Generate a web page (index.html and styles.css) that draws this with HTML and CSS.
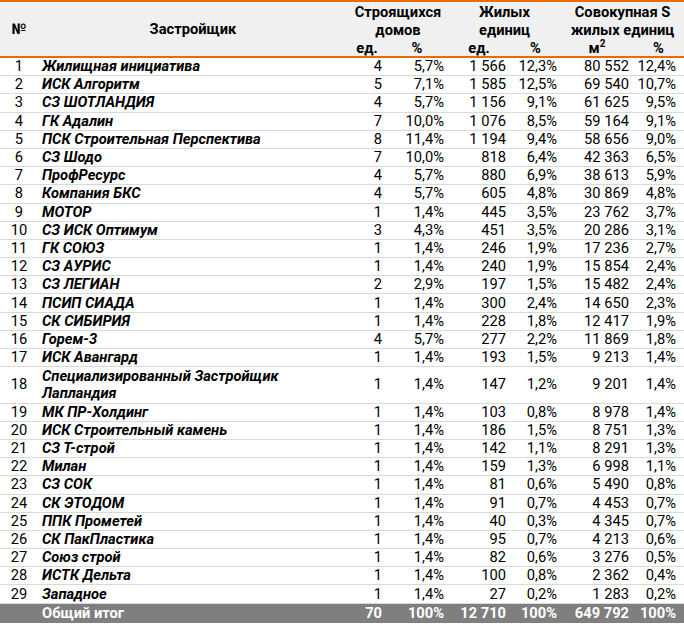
FILE: index.html
```
<!DOCTYPE html>
<html lang="ru">
<head>
<meta charset="utf-8">
<link rel="stylesheet" href="styles.css">
</head>
<body>
<table class="t">
<colgroup>
<col class="c-n"><col class="c-name"><col class="c-a"><col class="c-b"><col class="c-c"><col class="c-d"><col class="c-e"><col class="c-f">
</colgroup>
<thead>
<tr><th rowspan="3" class="h-span">№</th><th rowspan="3" class="h-span">Застройщик</th><th colspan="2">Строящихся</th><th colspan="2">Жилых</th><th colspan="2">Совокупная S</th></tr>
<tr><th colspan="2">домов</th><th colspan="2">единиц</th><th colspan="2">жилых единиц</th></tr>
<tr class="h-last"><th>ед.</th><th>%</th><th>ед.</th><th>%</th><th>м<sup>2</sup></th><th>%</th></tr>
</thead>
<tbody>
<tr><td class="no">1</td><td class="nm">Жилищная инициатива</td><td>4</td><td>5,7%</td><td>1 566</td><td>12,3%</td><td>80 552</td><td>12,4%</td></tr>
<tr><td class="no">2</td><td class="nm">ИСК Алгоритм</td><td>5</td><td>7,1%</td><td>1 585</td><td>12,5%</td><td>69 540</td><td>10,7%</td></tr>
<tr><td class="no">3</td><td class="nm">СЗ ШОТЛАНДИЯ</td><td>4</td><td>5,7%</td><td>1 156</td><td>9,1%</td><td>61 625</td><td>9,5%</td></tr>
<tr><td class="no">4</td><td class="nm">ГК Адалин</td><td>7</td><td>10,0%</td><td>1 076</td><td>8,5%</td><td>59 164</td><td>9,1%</td></tr>
<tr><td class="no">5</td><td class="nm">ПСК Строительная Перспектива</td><td>8</td><td>11,4%</td><td>1 194</td><td>9,4%</td><td>58 656</td><td>9,0%</td></tr>
<tr><td class="no">6</td><td class="nm">СЗ Шодо</td><td>7</td><td>10,0%</td><td>818</td><td>6,4%</td><td>42 363</td><td>6,5%</td></tr>
<tr><td class="no">7</td><td class="nm">ПрофРесурс</td><td>4</td><td>5,7%</td><td>880</td><td>6,9%</td><td>38 613</td><td>5,9%</td></tr>
<tr><td class="no">8</td><td class="nm">Компания БКС</td><td>4</td><td>5,7%</td><td>605</td><td>4,8%</td><td>30 869</td><td>4,8%</td></tr>
<tr><td class="no">9</td><td class="nm">МОТОР</td><td>1</td><td>1,4%</td><td>445</td><td>3,5%</td><td>23 762</td><td>3,7%</td></tr>
<tr><td class="no">10</td><td class="nm">СЗ ИСК Оптимум</td><td>3</td><td>4,3%</td><td>451</td><td>3,5%</td><td>20 286</td><td>3,1%</td></tr>
<tr><td class="no">11</td><td class="nm">ГК СОЮЗ</td><td>1</td><td>1,4%</td><td>246</td><td>1,9%</td><td>17 236</td><td>2,7%</td></tr>
<tr><td class="no">12</td><td class="nm">СЗ АУРИС</td><td>1</td><td>1,4%</td><td>240</td><td>1,9%</td><td>15 854</td><td>2,4%</td></tr>
<tr><td class="no">13</td><td class="nm">СЗ ЛЕГИАН</td><td>2</td><td>2,9%</td><td>197</td><td>1,5%</td><td>15 482</td><td>2,4%</td></tr>
<tr><td class="no">14</td><td class="nm">ПСИП СИАДА</td><td>1</td><td>1,4%</td><td>300</td><td>2,4%</td><td>14 650</td><td>2,3%</td></tr>
<tr><td class="no">15</td><td class="nm">СК СИБИРИЯ</td><td>1</td><td>1,4%</td><td>228</td><td>1,8%</td><td>12 417</td><td>1,9%</td></tr>
<tr><td class="no">16</td><td class="nm">Горем-3</td><td>4</td><td>5,7%</td><td>277</td><td>2,2%</td><td>11 869</td><td>1,8%</td></tr>
<tr><td class="no">17</td><td class="nm">ИСК Авангард</td><td>1</td><td>1,4%</td><td>193</td><td>1,5%</td><td>9 213</td><td>1,4%</td></tr>
<tr class="tall"><td class="no">18</td><td class="nm">Специализированный Застройщик Лапландия</td><td>1</td><td>1,4%</td><td>147</td><td>1,2%</td><td>9 201</td><td>1,4%</td></tr>
<tr><td class="no">19</td><td class="nm">МК ПР-Холдинг</td><td>1</td><td>1,4%</td><td>103</td><td>0,8%</td><td>8 978</td><td>1,4%</td></tr>
<tr><td class="no">20</td><td class="nm">ИСК Строительный камень</td><td>1</td><td>1,4%</td><td>186</td><td>1,5%</td><td>8 751</td><td>1,3%</td></tr>
<tr><td class="no">21</td><td class="nm">СЗ Т-строй</td><td>1</td><td>1,4%</td><td>142</td><td>1,1%</td><td>8 291</td><td>1,3%</td></tr>
<tr><td class="no">22</td><td class="nm">Милан</td><td>1</td><td>1,4%</td><td>159</td><td>1,3%</td><td>6 998</td><td>1,1%</td></tr>
<tr><td class="no">23</td><td class="nm">СЗ СОК</td><td>1</td><td>1,4%</td><td>81</td><td>0,6%</td><td>5 490</td><td>0,8%</td></tr>
<tr><td class="no">24</td><td class="nm">СК ЭТОДОМ</td><td>1</td><td>1,4%</td><td>91</td><td>0,7%</td><td>4 453</td><td>0,7%</td></tr>
<tr><td class="no">25</td><td class="nm">ППК Прометей</td><td>1</td><td>1,4%</td><td>40</td><td>0,3%</td><td>4 345</td><td>0,7%</td></tr>
<tr><td class="no">26</td><td class="nm">СК ПакПластика</td><td>1</td><td>1,4%</td><td>95</td><td>0,7%</td><td>4 213</td><td>0,6%</td></tr>
<tr><td class="no">27</td><td class="nm">Союз строй</td><td>1</td><td>1,4%</td><td>82</td><td>0,6%</td><td>3 276</td><td>0,5%</td></tr>
<tr><td class="no">28</td><td class="nm">ИСТК Дельта</td><td>1</td><td>1,4%</td><td>100</td><td>0,8%</td><td>2 362</td><td>0,4%</td></tr>
<tr><td class="no">29</td><td class="nm">Западное</td><td>1</td><td>1,4%</td><td>27</td><td>0,2%</td><td>1 283</td><td>0,2%</td></tr>
</tbody>
<tfoot>
<tr><td class="no"></td><td class="nm">Общий итог</td><td>70</td><td>100%</td><td>12 710</td><td>100%</td><td>649 792</td><td>100%</td></tr>
</tfoot>
</table>
</body>
</html>
```

FILE: styles.css
```
html, body {
  margin: 0;
  padding: 0;
  background: #ffffff;
}
.t {
  border-collapse: collapse;
  table-layout: fixed;
  width: 684px;
  font-family: Roboto, "Liberation Sans", sans-serif;
  font-size: 14.7px;
  color: #000;
  border-top: 2px solid #e46c0a;
}
.c-n { width: 38px; }
.c-name { width: 310px; }
.c-a { width: 38px; }
.c-b { width: 62px; }
.c-c { width: 62px; }
.c-d { width: 51px; }
.c-e { width: 72px; }
.c-f { width: 51px; }
thead tr {
  background: #f0f0f0;
}
thead th {
  background: #f0f0f0;
  font-weight: 700;
  text-align: center;
  height: 18px;
  padding: 0;
  line-height: 16px;
  vertical-align: bottom;
  white-space: nowrap;
}
thead th.h-span {
  vertical-align: middle;
  line-height: 18px;
}
thead th.h-span,
thead .h-last th {
  border-bottom: 2px solid #e46c0a;
}
sup {
  font-size: 10px;
  line-height: 0;
  vertical-align: 6px;
}
tbody td {
  height: 17.2px;
  padding: 0 4px 0 0;
  line-height: 17px;
  text-align: right;
  border-bottom: 1px solid #d9d9d9;
  vertical-align: middle;
  white-space: nowrap;
}
tbody td:last-child, tfoot td:last-child { padding-right: 8px; }
tbody tr.tall td { height: 35.4px; }
td.no {
  text-align: center;
  padding: 0;
}
td.nm {
  text-align: left;
  font-weight: 700;
  font-style: italic;
  padding-left: 4px;
  white-space: normal;
}
tfoot td {
  background: #7f7f7f;
  color: #fff;
  font-weight: 700;
  height: 19px;
  padding: 0 4px 0 0;
  line-height: 17px;
  text-align: right;
}
tfoot td.nm {
  font-style: normal;
}
```
